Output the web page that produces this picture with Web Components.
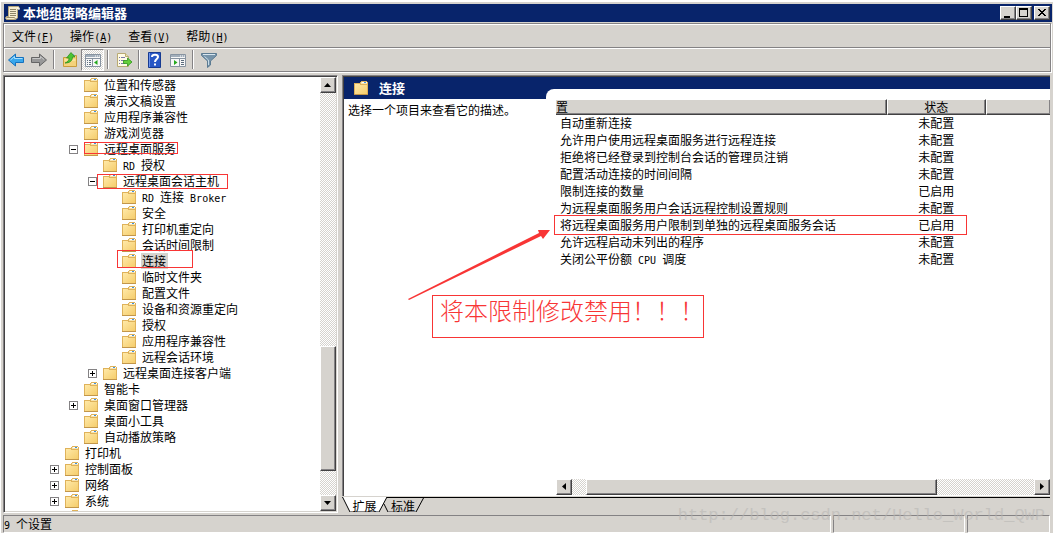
<!DOCTYPE html>
<html lang="zh-CN">
<head>
<meta charset="utf-8">
<title>本地组策略编辑器</title>
<style>
    :root {
        --face: #d6d3ce;
        --navy: #08246b;
        --shade: #848284;
        --dark: #424142;
        --mark: #f83535;
        --dither: repeating-conic-gradient(#ffffff 0 25%, #d6d3ce 0 50%) 0 0 / 2px 2px;
    }

    body {
        margin: 0;
        font: 12px/16px "Noto Sans CJK SC", sans-serif;
        color: #000000;
    }
</style>
</head>
<body>
<policy-window>
    <title-bar slot="title" label="本地组策略编辑器"></title-bar>
    <menu-bar slot="bars"></menu-bar>
    <tool-bar slot="bars"></tool-bar>

    <policy-tree slot="tree">
        <tree-item level="1" label="位置和传感器"></tree-item>
        <tree-item level="1" label="演示文稿设置"></tree-item>
        <tree-item level="1" label="应用程序兼容性"></tree-item>
        <tree-item level="1" label="游戏浏览器"></tree-item>
        <tree-item level="1" label="远程桌面服务" state="open"></tree-item>
        <tree-item level="2" label="RD 授权"></tree-item>
        <tree-item level="2" label="远程桌面会话主机" state="open"></tree-item>
        <tree-item level="3" label="RD 连接 Broker"></tree-item>
        <tree-item level="3" label="安全"></tree-item>
        <tree-item level="3" label="打印机重定向"></tree-item>
        <tree-item level="3" label="会话时间限制"></tree-item>
        <tree-item level="3" label="连接" selected></tree-item>
        <tree-item level="3" label="临时文件夹"></tree-item>
        <tree-item level="3" label="配置文件"></tree-item>
        <tree-item level="3" label="设备和资源重定向"></tree-item>
        <tree-item level="3" label="授权"></tree-item>
        <tree-item level="3" label="应用程序兼容性"></tree-item>
        <tree-item level="3" label="远程会话环境"></tree-item>
        <tree-item level="2" label="远程桌面连接客户端" state="closed"></tree-item>
        <tree-item level="1" label="智能卡"></tree-item>
        <tree-item level="1" label="桌面窗口管理器" state="closed"></tree-item>
        <tree-item level="1" label="桌面小工具"></tree-item>
        <tree-item level="1" label="自动播放策略"></tree-item>
        <tree-item level="0" label="打印机"></tree-item>
        <tree-item level="0" label="控制面板" state="closed"></tree-item>
        <tree-item level="0" label="网络" state="closed"></tree-item>
        <tree-item level="0" label="系统" state="closed"></tree-item>
        <tree-item level="0" label=""></tree-item>
    </policy-tree>

    <detail-pane slot="detail" heading="连接">
        <span slot="description">选择一个项目来查看它的描述。</span>
        <settings-table></settings-table>
    </detail-pane>
    <view-tabs slot="detail"></view-tabs>

    <status-bar slot="status" label="9 个设置"></status-bar>
</policy-window>
<note-layer></note-layer>

<script>
// Latin runs take half the width of a Chinese character
const mix = (text) => text.replace(/[\x20-\x7e]+/g, (run) => `<span class="half">${run}</span>`);

const halfStyle = `
    .half {
        font-family: "DejaVu Sans Mono", monospace;
        font-size: 10px;
        line-height: 0;
        white-space: pre;
    }
`;

const resetStyle = `
    *, *::before, *::after { box-sizing: border-box; }
    button {
        margin: 0;
        padding: 0;
        border: none;
        background: none;
        font: inherit;
        color: inherit;
    }
    svg { display: block; }
    ${halfStyle}
`;

const raised = `
    background: var(--face);
    border: 1px solid;
    border-color: #ffffff var(--dark) var(--dark) #ffffff;
    box-shadow: inset -1px -1px 0 var(--shade);
`;

const folderIcon = `
    <svg width="15" height="14" viewBox="0 0 15 14" aria-hidden="true" shape-rendering="crispEdges">
        <defs>
            <linearGradient id="f" x1="0" y1="0" x2="1" y2="1">
                <stop offset="0" stop-color="#ffe9a8"/>
                <stop offset="1" stop-color="#f5cd6c"/>
            </linearGradient>
        </defs>
        <path d="M0 2h6V1h1V0h6v1h1v12H0z" fill="#dfb25a"/>
        <path d="M7 1h6v2H7z" fill="#f6e3b0"/>
        <path d="M8 1h5v1H8z" fill="#ffffff"/>
        <path d="M10 1h2v1h-2z" fill="#3d92e0"/>
        <path d="M1 3h5v1h7v9H1z" fill="url(#f)"/>
        <path d="M0 13h14v1H0z" fill="#c2964a"/>
    </svg>
`;

class PolicyWindow extends HTMLElement {
    constructor() {
        super();
        this.attachShadow({ mode: "open" }).innerHTML = `
            <style>
                ${resetStyle}
                :host {
                    display: flex;
                    flex-direction: column;
                    box-sizing: border-box;
                    height: 100vh;
                    padding: 4px 1px 1px 3px;
                    background: var(--face);
                    box-shadow: inset 1px 2px 0 #ffffff, inset 0 -1px 0 #ffffff;
                    overflow: hidden;
                }
                .bars {
                    margin: 1px 1px 3px 0;
                    border: 1px solid var(--shade);
                    box-shadow: 1px 1px 0 #ffffff;
                }
                main {
                    flex: 1;
                    min-height: 0;
                    display: grid;
                    grid-template-columns: 335px minmax(0, 1fr);
                    gap: 4px;
                    margin-right: 2px;
                }
                .detail {
                    display: flex;
                    flex-direction: column;
                    min-height: 0;
                }
            </style>
            <slot name="title"></slot>
            <div class="bars"><slot name="bars"></slot></div>
            <main>
                <slot name="tree"></slot>
                <div class="detail"><slot name="detail"></slot></div>
            </main>
            <slot name="status"></slot>
        `;
    }
}

class TitleBar extends HTMLElement {
    connectedCallback() {
        this.attachShadow({ mode: "open" }).innerHTML = `
            <style>
                ${resetStyle}
                :host {
                    display: flex;
                    align-items: center;
                    height: 18px;
                    margin-left: 1px;
                    padding: 0 2px 0 1px;
                    background: var(--navy);
                    color: #ffffff;
                }
                h1 {
                    flex: 1;
                    margin: 0 0 0 2px;
                    font: bold 13px/18px "Noto Sans CJK SC", sans-serif;
                }
                button {
                    width: 16px;
                    height: 14px;
                    ${raised}
                }
                button:last-child { margin-left: 2px; }
            </style>
            <svg width="16" height="16" viewBox="0 0 16 16" aria-hidden="true">
                <path d="M3.500 1.500h10l1 2-2 1V13l-2 1.500h-9L.5 13l1-1.500h2z" fill="#f5ecd0" stroke="#b5a67d"/>
                <path d="M5 4.500h6M5 6.500h6M5 8.500h6M5 10.500h6" stroke="#8c8468"/>
                <path d="M1.500 12.500h8l1 1.500" fill="none" stroke="#9b8e68"/>
                <path d="M13 2v2h2" fill="none" stroke="#ffffff"/>
            </svg>
            <h1>${this.getAttribute("label")}</h1>
            <button type="button" aria-label="最小化">
                <svg width="14" height="12"><path d="M3 9h6v2H3z"/></svg>
            </button>
            <button type="button" aria-label="最大化">
                <svg width="14" height="12"><path d="M2 1h9v9H2zm1 2v6h7V3z" fill-rule="evenodd"/></svg>
            </button>
            <button type="button" aria-label="关闭">
                <svg width="14" height="12" shape-rendering="crispEdges">
                    <path d="M3 2h2v1h1v1h2V3h1V2h2v1h-1v1H9v1H8v1h1v1h1v1h1v1H9V8H8V7H6v1H5v1H3V8h1V7h1V6h1V5H5V4H4V3H3z"/>
                </svg>
            </button>
        `;
    }
}

class MenuBar extends HTMLElement {
    constructor() {
        super();
        const menus = [["文件", "F"], ["操作", "A"], ["查看", "V"], ["帮助", "H"]];
        this.attachShadow({ mode: "open" }).innerHTML = `
            <style>
                ${resetStyle}
                :host {
                    display: flex;
                    box-sizing: border-box;
                    height: 24px;
                    border-bottom: 1px solid var(--shade);
                    box-shadow: inset 1px 1px 0 #ffffff;
                }
                button { padding: 0 8px; line-height: 22px; }
            </style>
            ${menus.map(([name, key]) => `<button type="button">${name}<span class="half">(<u>${key}</u>)</span></button>`).join("")}
        `;
    }
}

const toolIcons = {
    back: `<path d="M.5 8 7.500 2v3.500h8v5h-8V14z" fill="#39a7ec" stroke="#1671bd"/><path d="M2.500 8 6.500 4.500v2h8" fill="none" stroke="#a9e1ff"/>`,
    forward: `<path d="M15.500 8 8.500 2v3.500h-8v5h8V14z" fill="#989898" stroke="#656565"/><path d="M1.500 6.500h8v-2L13 7.500" fill="none" stroke="#c8c8c8"/>`,
    up: `<path d="M1.500 5.500h5l1-2h7v11h-13z" fill="#f4d27b" stroke="#c89b3c"/><path d="M2.500 8h11" stroke="#fff0ba"/><path d="M9 3h3v1.500" stroke="#3d92e0" fill="none"/><path d="M3 11c3-1 4-3 4-5H4.500L9 .5 13 5h-2.500c0 4-3 6-7.500 6z" fill="#4cc431" stroke="#238a18" stroke-width=".7"/>`,
    tree: `<path d="M.5 2.500h15v12H.5z" fill="#f7f7f7" stroke="#8793a0"/><path d="M1 3h14v2H1z" fill="#a2aeba"/><path d="M10 4h1m1 0h1m1 0h1" stroke="#ffffff"/><path d="M1 6.500h14M7.500 7v7" stroke="#8793a0"/><path d="M2 8.500h1m1 0h2M2 10.500h1m1 0h2M2 12.500h1m1 0h2" stroke="#5c6c7c"/><path d="M12.500 8v5L9 10.500z" fill="#25a81c"/>`,
    export: `<path d="M1.500 1.500h8l3 3v10h-11z" fill="#fffbe5" stroke="#b9aa73"/><path d="M9.500 1.500v3h3" fill="#eadfae" stroke="#b9aa73"/><path d="M3 5.500h1m1 0h4M3 8.500h1m1 0h4M3 11.500h1m1 0h4" stroke="#7c79a8"/><path d="M7.500 8.500h4V6l4.500 4-4.500 4v-2.500h-4z" fill="#65cf3b" stroke="#2e961b" stroke-width=".8"/>`,
    help: `<path d="M1.500.5h12v15h-12z" fill="#2857c5" stroke="#173a91"/><path d="M2.500 1v14" stroke="#6b93ed"/><path d="M5 5c0-3 6-3 6 0 0 2-3 2-3 5" fill="none" stroke="#ffffff" stroke-width="2"/><path d="M7 11.500h2v2H7z" fill="#ffffff"/>`,
    pane: `<path d="M.5 2.500h15v12H.5z" fill="#f7f7f7" stroke="#8793a0"/><path d="M1 3h14v2H1z" fill="#a2aeba"/><path d="M10 4h1m1 0h1m1 0h1" stroke="#ffffff"/><path d="M1 6.500h14M9.500 7v7" stroke="#8793a0"/><path d="M11 8.500h3M11 10.500h3M11 12.500h3" stroke="#5c6c7c"/><path d="M4 8v5l3.500-2.500z" fill="#25a81c"/>`,
    filter: `<path d="M.5 1.500h15v2L9.500 9v4l-3 2.500V9l-6-5.500z" fill="#7794aa" stroke="#5c7b92"/><path d="M2 2.500h12" stroke="#d8e6ef"/><path d="M3.500 4.500 7.500 8v5" fill="none" stroke="#c9dce8"/>`
};

class ToolBar extends HTMLElement {
    constructor() {
        super();
        const groups = [
            [["back", "后退"], ["forward", "前进"]],
            [["up", "上移一级"], ["tree", "显示/隐藏控制台树"]],
            [["export", "导出列表"]],
            [["help", "帮助"], ["pane", "显示/隐藏操作窗格"]],
            [["filter", "筛选器"]]
        ];
        this.attachShadow({ mode: "open" }).innerHTML = `
            <style>
                ${resetStyle}
                :host {
                    display: flex;
                    align-items: center;
                    height: 23px;
                    box-shadow: inset 1px 1px 0 #ffffff;
                }
                button {
                    display: grid;
                    place-items: center;
                    width: 23px;
                    height: 22px;
                }
                button[aria-pressed] {
                    background: var(--dither);
                    border: 1px solid;
                    border-color: var(--shade) #ffffff #ffffff var(--shade);
                }
                hr {
                    width: 2px;
                    height: 19px;
                    margin: 0 3px;
                    border: none;
                    border-left: 1px solid var(--shade);
                    border-right: 1px solid #ffffff;
                }
            </style>
            ${groups.map((group) => group.map(([icon, label]) => `
                <button type="button" aria-label="${label}" ${icon === "tree" ? `aria-pressed="true"` : ""}>
                    <svg width="16" height="16" viewBox="0 0 16 16">${toolIcons[icon]}</svg>
                </button>
            `).join("")).join("<hr>")}
        `;
    }
}

class ScrollBar extends HTMLElement {
    connectedCallback() {
        const across = this.hasAttribute("horizontal");
        const arrows = across ? ["M9 3v7L5 6.500z", "M5 3v7l4-3.500z"] : ["M3 9h7L6.500 5z", "M3 5h7L6.500 9z"];
        this.attachShadow({ mode: "open" }).innerHTML = `
            <style>
                ${resetStyle}
                :host {
                    display: flex;
                    flex-direction: ${across ? "row" : "column"};
                    background: var(--dither);
                }
                button, .thumb { ${raised} }
                button {
                    flex: none;
                    width: 16px;
                    height: 16px;
                }
                .track {
                    flex: 1;
                    display: flex;
                    flex-direction: inherit;
                    min-height: 0;
                }
                .before { flex: 0 0 ${this.getAttribute("start")}; }
                .thumb {
                    flex: 0 0 ${this.getAttribute("size")};
                    min-width: 16px;
                    min-height: 16px;
                }
            </style>
            <button type="button" aria-label="${across ? "向左滚动" : "向上滚动"}"><svg width="14" height="14"><path d="${arrows[0]}"/></svg></button>
            <div class="track"><div class="before"></div><div class="thumb"></div></div>
            <button type="button" aria-label="${across ? "向右滚动" : "向下滚动"}"><svg width="14" height="14"><path d="${arrows[1]}"/></svg></button>
        `;
    }
}

class PolicyTree extends HTMLElement {
    constructor() {
        super();
        this.attachShadow({ mode: "open" }).innerHTML = `
            <style>
                ${resetStyle}
                :host {
                    display: flex;
                    box-sizing: border-box;
                    min-height: 0;
                    background: #ffffff;
                    border: 1px solid;
                    border-color: var(--shade) #ffffff #ffffff var(--shade);
                    box-shadow: inset 1px 1px 0 var(--dark), inset -1px -1px 0 var(--face);
                    padding: 1px;
                }
                .items {
                    flex: 1;
                    overflow: hidden;
                }
            </style>
            <div class="items" role="tree"><slot></slot></div>
            <scroll-bar start="63%" size="31%"></scroll-bar>
        `;
    }
}

class TreeItem extends HTMLElement {
    connectedCallback() {
        const state = this.getAttribute("state");
        this.setAttribute("role", "treeitem");
        this.style.setProperty("--level", this.getAttribute("level"));
        this.attachShadow({ mode: "open" }).innerHTML = `
            <style>
                ${resetStyle}
                :host {
                    display: flex;
                    align-items: center;
                    height: 16px;
                    padding-left: calc(45px + 19px * var(--level));
                    white-space: nowrap;
                }
                .toggle {
                    width: 9px;
                    margin-right: 6px;
                }
                button {
                    display: block;
                    width: 9px;
                    height: 9px;
                    border: 1px solid var(--shade);
                    background: #ffffff;
                }
                .label {
                    margin-left: 4px;
                    padding: 0 2px 0 1px;
                }
                :host([selected]) .label { background: var(--face); }
            </style>
            <span class="toggle">
                ${state ? `<button type="button" aria-label="${state === "open" ? "折叠" : "展开"}">
                    <svg width="7" height="7"><path d="M1 3h5v1H1z${state === "closed" ? "M3 1h1v5H3z" : ""}"/></svg>
                </button>` : ""}
            </span>
            ${folderIcon}
            <span class="label">${mix(this.getAttribute("label"))}</span>
        `;
    }
}

class DetailPane extends HTMLElement {
    connectedCallback() {
        this.attachShadow({ mode: "open" }).innerHTML = `
            <style>
                ${resetStyle}
                :host {
                    flex: 1;
                    display: grid;
                    grid-template-columns: 202px minmax(0, 1fr);
                    min-height: 0;
                    padding: 2px 0 0 2px;
                    border-bottom: 1px solid var(--face);
                    background: var(--navy);
                    box-shadow: inset 1px 1px 0 var(--shade), inset 2px 2px 0 var(--dark);
                }
                .about {
                    display: flex;
                    flex-direction: column;
                }
                h2 {
                    display: flex;
                    align-items: center;
                    gap: 10px;
                    height: 22px;
                    margin: 0;
                    padding-left: 10px;
                    color: #ffffff;
                    font: bold 13px/22px "Noto Sans CJK SC", sans-serif;
                }
                p {
                    flex: 1;
                    margin: 0;
                    padding: 3px 0 0 4px;
                    background: #ffffff;
                    white-space: nowrap;
                }
                .list {
                    display: flex;
                    flex-direction: column;
                    margin-top: 12px;
                    padding: 10px 0 1px 10px;
                    border-radius: 8px 0 0 0;
                    background: #ffffff;
                }
                .rows { flex: 1; }
            </style>
            <section class="about">
                <h2>${folderIcon}${this.getAttribute("heading")}</h2>
                <p><slot name="description"></slot></p>
            </section>
            <section class="list">
                <div class="rows"><slot></slot></div>
                <scroll-bar horizontal start="3%" size="76%"></scroll-bar>
            </section>
        `;
    }
}

class SettingsTable extends HTMLElement {
    constructor() {
        super();
        const rows = [
            ["自动重新连接", "未配置"],
            ["允许用户使用远程桌面服务进行远程连接", "未配置"],
            ["拒绝将已经登录到控制台会话的管理员注销", "未配置"],
            ["配置活动连接的时间间隔", "未配置"],
            ["限制连接的数量", "已启用"],
            ["为远程桌面服务用户会话远程控制设置规则", "未配置"],
            ["将远程桌面服务用户限制到单独的远程桌面服务会话", "已启用"],
            ["允许远程启动未列出的程序", "未配置"],
            ["关闭公平份额 CPU 调度", "未配置"]
        ];
        this.attachShadow({ mode: "open" }).innerHTML = `
            <style>
                ${resetStyle}
                :host { display: block; }
                table {
                    width: 100%;
                    border-collapse: separate;
                    border-spacing: 0;
                    table-layout: fixed;
                }
                .name { width: 67%; }
                .state { width: 20%; }
                th {
                    height: 16px;
                    padding: 0;
                    font-weight: normal;
                    line-height: 14px;
                    ${raised}
                }
                th:first-child {
                    border-left: none;
                    text-align: left;
                }
                th:last-child { border-right: none; }
                td {
                    height: 17px;
                    padding: 0 0 2px;
                    line-height: 15px;
                    text-align: center;
                    white-space: nowrap;
                }
                td:first-child {
                    padding-left: 4px;
                    text-align: left;
                }
            </style>
            <table>
                <colgroup><col class="name"><col class="state"><col></colgroup>
                <thead><tr><th>置</th><th>状态</th><th></th></tr></thead>
                <tbody>
                    ${rows.map(([name, state]) => `<tr><td>${mix(name)}</td><td>${state}</td><td></td></tr>`).join("")}
                </tbody>
            </table>
        `;
    }
}

class ViewTabs extends HTMLElement {
    constructor() {
        super();
        this.attachShadow({ mode: "open" }).innerHTML = `
            <style>
                ${resetStyle}
                :host {
                    display: flex;
                    box-sizing: border-box;
                    height: 16px;
                    border-top: 1px solid #000000;
                }
                button {
                    position: relative;
                    width: 45px;
                    height: 15px;
                    line-height: 15px;
                }
                button + button {
                    width: 42px;
                    margin-left: -5px;
                }
                svg {
                    position: absolute;
                    inset: -1px 0 0 0;
                }
                span { position: relative; }
            </style>
            <button type="button" aria-pressed="true">
                <svg width="45" height="16">
                    <path d="M0 0h45l-8 15H8z" fill="#ffffff"/>
                    <path d="M.5 0 8 15M37 15 45 0" fill="none" stroke="#000000"/>
                    <path d="M8 14.500h29" stroke="#848284"/>
                </svg>
                <span>扩展</span>
            </button>
            <button type="button">
                <svg width="42" height="16">
                    <path d="M2 7 6 15M34 15 41.500 1" fill="none" stroke="#000000"/>
                    <path d="M6 14.500h28" stroke="#848284"/>
                </svg>
                <span>标准</span>
            </button>
        `;
    }
}

class StatusBar extends HTMLElement {
    connectedCallback() {
        this.attachShadow({ mode: "open" }).innerHTML = `
            <style>
                ${resetStyle}
                :host {
                    display: grid;
                    grid-template-columns: minmax(0, 1fr) 132px 83px;
                    gap: 2px;
                    margin: 2px 2px 0 0;
                }
                div {
                    height: 18px;
                    border: 1px solid;
                    border-color: var(--shade) #ffffff #ffffff var(--shade);
                    line-height: 16px;
                }
            </style>
            <div role="status">${mix(this.getAttribute("label"))}</div>
            <div></div>
            <div></div>
        `;
    }
}

// Red frames, arrow and remark drawn over the window
class NoteLayer extends HTMLElement {
    constructor() {
        super();
        const frames = [
            [84, 142, 94, 12],
            [97, 174, 131, 15],
            [117, 250, 76, 18],
            [554, 215, 413, 20]
        ];
        this.attachShadow({ mode: "open" }).innerHTML = `
            <style>
                ${resetStyle}
                :host {
                    position: absolute;
                    inset: 0;
                    overflow: hidden;
                    pointer-events: none;
                }
                .frame, .remark, .mark, .arrow { position: absolute; }
                .frame, .remark { border: 1px solid var(--mark); }
                .remark {
                    left: 432px;
                    top: 295px;
                    width: 272px;
                    height: 43px;
                    padding-left: 7px;
                    color: var(--mark);
                    font-size: 24px;
                    font-weight: 300;
                    line-height: 28px;
                    white-space: nowrap;
                }
                .arrow {
                    left: 408px;
                    top: 229px;
                }
                .mark {
                    right: 8px;
                    bottom: 6px;
                    color: #b9b7b5;
                    font: 17px/24px "Liberation Mono", monospace;
                    opacity: 0.6;
                }
            </style>
            ${frames.map(([x, y, w, h]) => `<div class="frame" style="left:${x}px;top:${y}px;width:${w}px;height:${h}px"></div>`).join("")}
            <svg class="arrow" width="144" height="72">
                <path d="M0 70 131 4 130 1 142 1 135 10 133 7 1 71z" fill="#f83535"/>
            </svg>
            <div class="remark">将本限制修改禁用！！！</div>
            <div class="mark">http://blog.csdn.net/Hello_World_QWP</div>
        `;
    }
}

customElements.define("policy-window", PolicyWindow);
customElements.define("title-bar", TitleBar);
customElements.define("menu-bar", MenuBar);
customElements.define("tool-bar", ToolBar);
customElements.define("scroll-bar", ScrollBar);
customElements.define("policy-tree", PolicyTree);
customElements.define("tree-item", TreeItem);
customElements.define("detail-pane", DetailPane);
customElements.define("settings-table", SettingsTable);
customElements.define("view-tabs", ViewTabs);
customElements.define("status-bar", StatusBar);
customElements.define("note-layer", NoteLayer);
</script>
</body>
</html>
